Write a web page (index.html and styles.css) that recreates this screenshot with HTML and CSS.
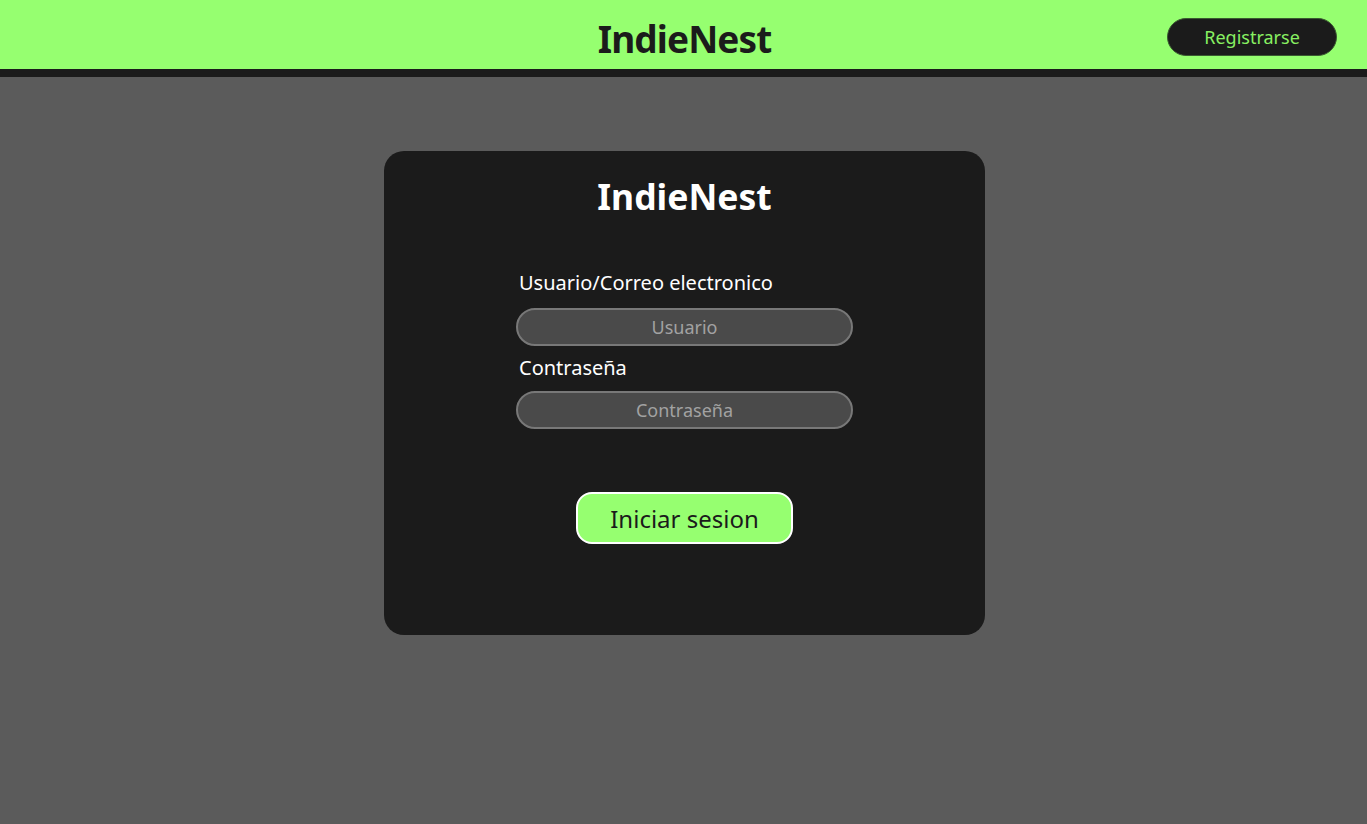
FILE: index.html
```html
<!DOCTYPE html>
<html lang="es">
<head>
<meta charset="utf-8">
<title>IndieNest</title>
<link rel="stylesheet" href="styles.css">
</head>
<body>
<header class="topbar">
  <div class="spacer"></div>
  <h1 class="brand">IndieNest</h1>
  <div class="actions"><button class="register">Registrarse</button></div>
</header>
<main class="page">
  <section class="card">
    <h2 class="card-title">IndieNest</h2>
    <form class="form">
      <label class="label label-first" for="user">Usuario/Correo electronico</label>
      <input class="field" id="user" type="text" placeholder="Usuario">
      <label class="label" for="pass">Contraseña</label>
      <input class="field" id="pass" type="password" placeholder="Contraseña">
      <button class="submit" type="button">Iniciar sesion</button>
    </form>
  </section>
</main>
</body>
</html>
```

FILE: styles.css
```css
* { box-sizing: border-box; }
html, body { margin: 0; padding: 0; }
body {
  background: #5b5b5b;
  font-family: "Noto Sans", "Open Sans", sans-serif;
  min-height: 824px;
}
.topbar {
  height: 77px;
  background: #96ff70;
  border-bottom: 8px solid #1b1b1b;
  padding-top: 5px;
  padding-left: 2px;
  display: grid;
  grid-template-columns: 1fr auto 1fr;
  align-items: center;
}
.brand {
  margin: 0;
  font-size: 37px;
  letter-spacing: -0.9px;
  font-weight: 700;
  color: #1b1b1b;
  line-height: 49px;
  padding-top: 2px;
}
.actions {
  display: flex;
  justify-content: flex-end;
  padding-right: 30px;
}
.register {
  width: 170px;
  height: 38px;
  border-radius: 19px;
  background: #1b1b1b;
  border: 1px solid #3a5a30;
  color: #88f062;
  font-family: "Noto Sans", sans-serif;
  font-size: 18px;
  padding: 0;
}
.page {
  display: flex;
  justify-content: center;
  padding-top: 74px;
  padding-left: 2px;
}
.card {
  width: 601px;
  height: 484px;
  background: #1b1b1b;
  border-radius: 20px;
  padding-top: 21px;
  display: flex;
  flex-direction: column;
  align-items: center;
}
.card-title {
  margin: 0;
  font-size: 35.5px;
  font-weight: 700;
  line-height: 49px;
  color: #ffffff;
}
.form {
  width: 337px;
  display: flex;
  flex-direction: column;
  margin-top: 49px;
}
.label {
  color: #ffffff;
  font-size: 20px;
  line-height: 26px;
  padding-left: 3px;
  margin-top: 9px;
  margin-bottom: 10px;
}
.label-first { margin-top: 0; margin-bottom: 12px; }
.field {
  width: 337px;
  height: 38px;
  border-radius: 19px;
  background: #4a4a4a;
  border: 2px solid #787878;
  color: #ffffff;
  text-align: center;
  font-family: "Noto Sans", sans-serif;
  font-size: 18px;
  outline: none;
}
.field::placeholder { color: #a2a2a2; }
.submit {
  align-self: center;
  margin-top: 63px;
  width: 217px;
  height: 52px;
  border-radius: 16px;
  background: #96ff70;
  border: 2px solid #ffffff;
  color: #1b1b1b;
  font-family: "Noto Sans", sans-serif;
  font-size: 24px;
  padding: 0;
}
```
